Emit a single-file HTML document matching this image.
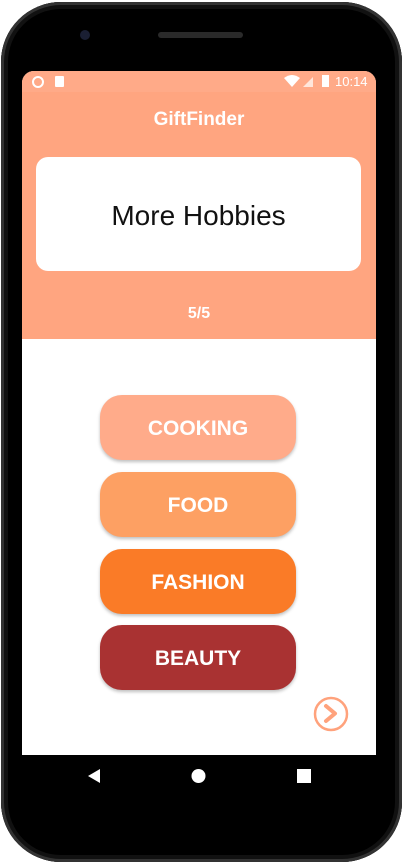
<!DOCTYPE html>
<html><head><style>
body{margin:0;width:403px;height:864px;background:#fff;overflow:hidden;font-family:"Liberation Sans",sans-serif;position:relative}
.phone{position:absolute;left:1px;top:2px;width:401px;height:860px;background:#000;border-radius:60px;box-shadow:inset 0 0 0 3px #333,inset 0 0 0 7px #111}
.screen{position:absolute;left:22px;top:71px;width:354px;height:684px;background:#fff;border-radius:12px 12px 0 0;overflow:hidden}
.hdr{position:absolute;left:0;top:0;width:354px;height:268px;background:#FFA580}
.sb{position:absolute;left:0;top:0;width:354px;height:21px;background:#FFAA88}
.btn{position:absolute;left:78px;width:196px;height:65px;border-radius:22px;color:#fff;font-size:21px;font-weight:bold;text-align:center;line-height:67px;box-shadow:0 2px 3px rgba(0,0,0,.25)}
</style></head><body>
<div class="phone"></div>
<div style="position:absolute;left:80px;top:30px;width:10px;height:10px;border-radius:50%;background:#1a1f33"></div>
<div style="position:absolute;left:158px;top:32px;width:85px;height:6px;border-radius:3px;background:#2a2a2a"></div>
<div class="screen">
<div class="hdr"></div>
<div class="sb"></div>
<div style="position:absolute;left:10px;top:5px;width:8px;height:8px;border:2px solid #fff;border-radius:50%"></div>
<div style="position:absolute;left:33px;top:5px;width:9px;height:11px;background:#fff;border-radius:1px"></div>
<svg style="position:absolute;left:262px;top:4px" width="40" height="14"><path d="M0 3 Q8 -3 16 3 L8 12Z" fill="#fff"/><path d="M29 2 L29 12 L19 12Z" fill="#fff" opacity=".7"/></svg>
<div style="position:absolute;left:300px;top:4px;width:7px;height:12px;background:#fff"></div>
<div style="position:absolute;left:313px;top:3px;color:#fff;font-size:13px">10:14</div>
<div style="position:absolute;left:0;top:38px;width:354px;text-align:center;color:#fff;font-weight:bold;font-size:19px">GiftFinder</div>
<div style="position:absolute;left:14px;top:86px;width:325px;height:114px;background:#fff;border-radius:12px;text-align:center;line-height:118px;font-size:28px;color:#111">More Hobbies</div>
<div style="position:absolute;left:0;top:234px;width:354px;text-align:center;color:#fff;font-weight:bold;font-size:16px">5/5</div>
<div class="btn" style="top:324px;background:#FFAB8A">COOKING</div>
<div class="btn" style="top:401px;background:#FDA063">FOOD</div>
<div class="btn" style="top:478px;background:#FA7B27">FASHION</div>
<div class="btn" style="top:554px;background:#A93232">BEAUTY</div>
<svg style="position:absolute;left:290px;top:624px" width="38" height="38"><circle cx="19" cy="19" r="16" fill="none" stroke="#FFA27C" stroke-width="2.5"/><path d="M14 11 L23 18.5 L14 26" fill="none" stroke="#FFA27C" stroke-width="4" stroke-linecap="round" stroke-linejoin="round"/></svg>
</div>
<svg style="position:absolute;left:0;top:764px" width="403" height="30"><path d="M88 12 L100 5 L100 19Z" fill="#fff"/><circle cx="198.5" cy="12" r="7" fill="#fff"/><rect x="297" y="5" width="14" height="14" fill="#fff"/></svg>
</body></html>
